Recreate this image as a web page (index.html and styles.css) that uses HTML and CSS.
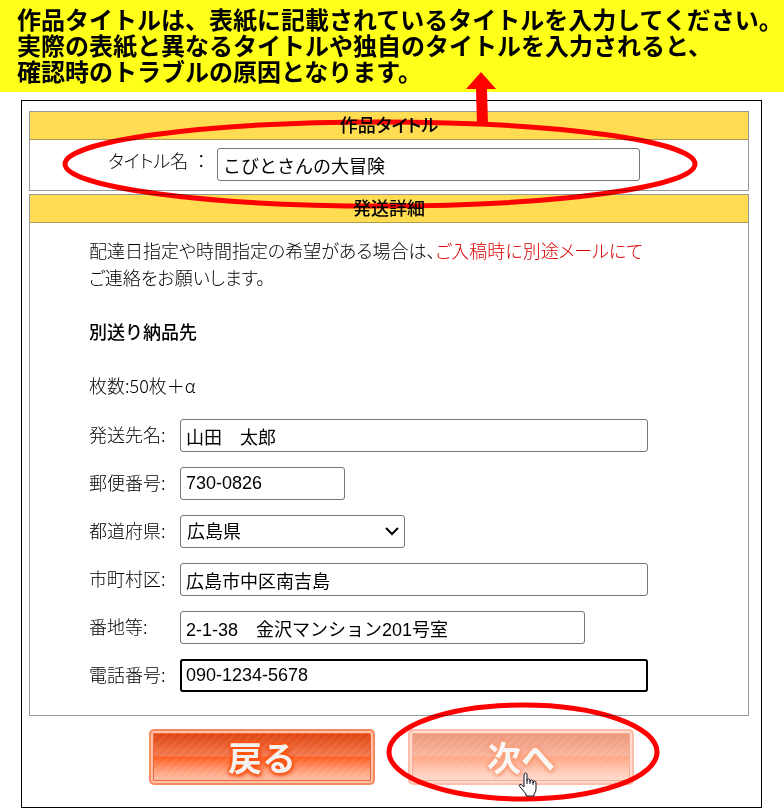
FILE: index.html
```html
<!DOCTYPE html>
<html lang="ja">
<head>
    <meta charset="UTF-8">
    <meta name="viewport" content="width=device-width, initial-scale=1.0">
    <title>作品タイトル・発送詳細</title>
    <link rel="stylesheet" href="styles.css">
</head>
<body>
    <p class="notice">作品タイトルは、表紙に記載されているタイトルを入力してください。<br>実際の表紙と異なるタイトルや独自のタイトルを入力されると、<br>確認時のトラブルの原因となります。</p>

    <form class="order">
        <section class="panel">
            <h2>作品タイトル</h2>
            <div class="title-row">
                <label for="title">タイトル名 <span class="full">：</span></label>
                <input id="title" class="w-title" type="text" value="こびとさんの大冒険">
            </div>
            <!-- red ring and arrow pointing at the notice -->
            <svg class="mark mark-title" width="640" height="140" viewBox="0 0 640 140">
                <ellipse cx="320" cy="93" rx="315" ry="42" fill="none" stroke="#f00" stroke-width="5"/>
            </svg>
            <svg class="arrow" width="30" height="53" viewBox="0 0 30 53">
                <path d="M15 0L30 17H21L22 53H11L10 17H0Z" fill="#f00"/>
            </svg>
        </section>

        <section class="panel">
            <h2>発送詳細</h2>
            <div class="detail">
                <p>配達日指定や時間指定の希望がある場合は、<span class="red">ご入稿時に別途メールにて</span><br>ご連絡をお願いします。</p>
                <h3>別送り納品先</h3>
                <p class="full">枚数:50枚＋α</p>
                <div class="fields">
                    <label for="name">発送先名:</label>
                    <input id="name" class="w-full" type="text" value="山田　太郎">
                    <label for="zip">郵便番号:</label>
                    <input id="zip" class="w-zip" type="text" value="730-0826">
                    <label for="pref">都道府県:</label>
                    <span class="select">
                        <select id="pref">
                            <option>広島県</option>
                        </select>
                        <svg width="14" height="9" viewBox="0 0 14 9"><path d="M1 1L7 7L13 1" fill="none" stroke="#000" stroke-width="2"/></svg>
                    </span>
                    <label for="city">市町村区:</label>
                    <input id="city" class="w-full" type="text" value="広島市中区南吉島">
                    <label for="street">番地等:</label>
                    <input id="street" class="w-street" type="text" value="2-1-38　金沢マンション201号室">
                    <label for="tel">電話番号:</label>
                    <input id="tel" class="w-full active" type="text" value="090-1234-5678">
                </div>
            </div>
        </section>

        <div class="buttons">
            <button class="btn" type="button">戻る</button>
            <div class="next">
                <button class="btn faded" type="button">次へ</button>
                <svg class="mark mark-next" width="280" height="110" viewBox="0 0 280 110">
                    <ellipse cx="140" cy="55" rx="134" ry="47" fill="none" stroke="#f00" stroke-width="5"/>
                </svg>
                <svg class="cursor" width="20" height="25" viewBox="0 0 20 25">
                    <path d="M6 15V3Q6 1 7.500 1T9 3V9Q9 7 10.500 7T12 8V10Q12 8 13.500 8T15 9V11Q15 9 16.500 9T18 11V17Q18 20 16 22V24H8V22L3 16Q0 13 2 12.500Q3 12 6 15Z" fill="#fff" stroke="#112" stroke-width="1"/>
                    <path d="M9 9V12M12 9V12M15 10V13" stroke="#112"/>
                </svg>
            </div>
        </div>
    </form>
</body>
</html>
```
FILE: styles.css
```css
* {
    box-sizing: border-box;
}
body {
    margin: 0;
    background-color: #fff;
    color: #000;
    font-family: "Noto Sans CJK JP", sans-serif;
    font-size: 18px;
    line-height: 27px;
}
p, h2, h3 {
    margin: 0;
}
.notice {
    padding: 6px 0 8px 17px;
    background-color: #ffff1a;
    font-size: 24px;
    font-weight: bold;
    line-height: 26px;
    white-space: nowrap;
}
.order {
    margin: 8px 22px 0 21px;
    padding: 10px 12px 22px 7px;
    border: 1px solid #000;
    font-weight: 300;
    font-feature-settings: "palt";
}
.full {
    font-feature-settings: normal;
}
.panel {
    position: relative;
    margin-bottom: 3px;
    border: 1px solid #999;
}
.panel h2 {
    height: 28px;
    border-bottom: 1px solid #b09a50;
    background-color: #ffdc52;
    font-size: 18px;
    font-weight: 500;
    line-height: 25px;
    text-align: center;
}
.title-row {
    display: flex;
    align-items: flex-start;
    padding: 8px 0 9px 78px;
}
.title-row label {
    width: 109px;
    line-height: 25px;
}
.detail {
    padding: 14px 20px 23px 59px;
}
.red {
    color: #d00;
}
.detail h3 {
    margin: 27px 0;
    font-size: 18px;
    font-weight: 500;
    font-feature-settings: normal;
}
.fields {
    display: grid;
    grid-template-columns: 91px 1fr;
    gap: 15px 0;
    align-items: center;
    margin-top: 20px;
}
.fields label {
    line-height: 25px;
    padding-bottom: 2px;
}
input, select {
    height: 33px;
    max-width: 100%;
    padding: 1px 5px;
    border: 1px solid #767676;
    border-radius: 3px;
    background-color: #fff;
    color: #000;
    font-family: "Liberation Sans", "Noto Sans CJK JP", sans-serif;
    font-size: 18px;
    font-feature-settings: normal;
}
.w-title {
    width: 423px;
}
.w-full {
    width: 468px;
}
.w-zip {
    width: 165px;
}
.w-street {
    width: 405px;
}
.active {
    outline: 2px solid #000;
    outline-offset: -2px;
}
.select {
    position: relative;
    display: flex;
    width: 225px;
}
.select select {
    width: 100%;
    padding-left: 6px;
    appearance: none;
}
.select svg {
    position: absolute;
    top: 12px;
    right: 6px;
    pointer-events: none;
}
.buttons {
    display: flex;
    gap: 33px;
    margin-top: 13px;
    padding-left: 120px;
}
.next {
    position: relative;
}
.btn {
    display: block;
    width: 226px;
    height: 56px;
    padding: 0;
    border: 2px solid #f88a62;
    border-radius: 5px;
    background:
        repeating-linear-gradient(135deg, rgba(255,255,255,0.06) 0 3px, transparent 3px 6px),
        linear-gradient(#dc3c06, #f4794f 48%, #ff5c1c 50%, #ffa684 80%, #ffc4ae);
    box-shadow: inset 0 0 0 2px #ffc0a8, inset 0 0 0 3px #f0683c;
    color: #f4f2f0;
    font-family: "Noto Sans CJK JP", sans-serif;
    font-size: 34px;
    font-weight: bold;
    line-height: 50px;
    text-shadow: 0 0 3px #ff5510, 0 0 3px #ff5510, 0 0 4px #ff5510, 0 0 4px #ff5510, 1px 2px 4px #e04a10;
}
.faded {
    opacity: 0.55;
}
.mark {
    position: absolute;
    mix-blend-mode: multiply;
    pointer-events: none;
}
.mark-title {
    z-index: 1;
    top: -41px;
    left: 30px;
}
.arrow {
    position: absolute;
    z-index: 1;
    top: -40px;
    left: 436px;
    pointer-events: none;
}
.mark-next {
    top: -32px;
    left: -25px;
}
.cursor {
    position: absolute;
    top: 43px;
    left: 110px;
    pointer-events: none;
}
```
